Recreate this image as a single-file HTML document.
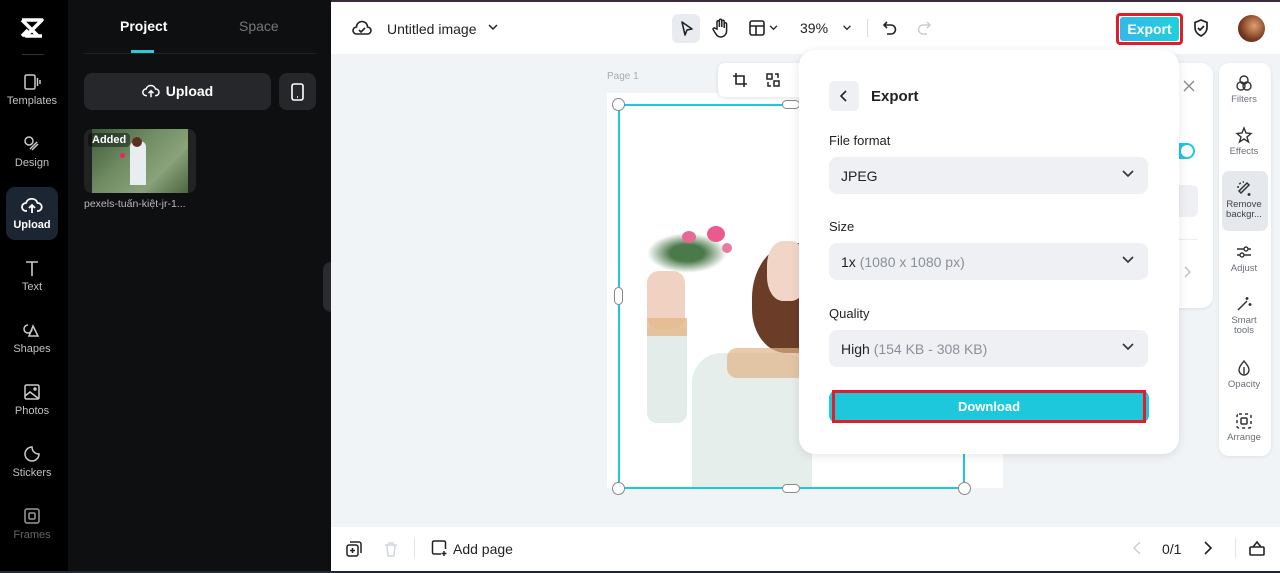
<!DOCTYPE html>
<html><head><meta charset="utf-8"><style>
*{box-sizing:border-box;margin:0;padding:0}
body{width:1280px;height:573px;overflow:hidden;font-family:"Liberation Sans",sans-serif;background:#f1f4f7;position:relative}
.a{position:absolute}
.nav{left:0;top:0;width:68px;height:573px;background:#000}
.ni{position:absolute;left:0;width:64px;text-align:center;color:#bfc1c4;font-size:11px}
.ni svg{display:block;margin:0 auto 3px}
.panel{left:68px;top:0;width:263px;height:573px;background:#0e0f11}
.lbl{font-size:13px;color:#222}
.sel{position:absolute;left:30px;width:319px;height:37px;background:#eef0f3;border-radius:8px;font-size:14px;color:#222;padding:11px 12px}
.sel .g{color:#8a9099}
.chev{position:absolute;right:14px;top:13px}
.rt{position:absolute;left:0;width:50px;text-align:center;font-size:9.5px;color:#6b7078;line-height:10px}
.rt svg{display:block;margin:0 auto 3px}
</style></head><body>
<div class="a" style="left:0;top:0;width:1280px;height:2px;background:#3a2a3a"></div>
<!-- left nav -->
<div class="a nav">
 <svg class="a" style="left:18px;top:17px" width="28" height="22" viewBox="0 0 28 22"><path d="M4 3h20l-16 16h16M4 3l16 16M4 19l6-6" fill="none" stroke="#fff" stroke-width="3.5" stroke-linejoin="round"/></svg>
 <div class="a" style="left:22px;top:54px;width:22px;height:1px;background:#333"></div>
 <div class="ni" style="top:72px"><svg width="20" height="20" viewBox="0 0 20 20" fill="none" stroke="#ccc" stroke-width="1.5"><rect x="3" y="3" width="10" height="14" rx="1.5"/><path d="M15.5 6v8M18 8v4"/></svg>Templates</div>
 <div class="ni" style="top:134px"><svg width="20" height="20" viewBox="0 0 20 20" fill="none" stroke="#ccc" stroke-width="1.5"><circle cx="7" cy="7" r="4"/><path d="M10 16l6-6M8 15l7-7"/></svg>Design</div>
 <div class="a" style="left:6px;top:187px;width:52px;height:53px;background:#1c2633;border-radius:9px"></div>
 <div class="ni" style="top:196px;color:#fff;font-weight:bold"><svg width="22" height="20" viewBox="0 0 22 20" fill="none" stroke="#fff" stroke-width="1.8"><path d="M6 15H5a4 4 0 010-8 6 6 0 0111.5 0A4 4 0 0117 15h-1M11 17V9M8 12l3-3 3 3"/></svg>Upload</div>
 <div class="ni" style="top:258px"><svg width="20" height="20" viewBox="0 0 20 20" fill="none" stroke="#ccc" stroke-width="1.6"><path d="M4 4h12M10 4v14"/></svg>Text</div>
 <div class="ni" style="top:320px"><svg width="20" height="20" viewBox="0 0 20 20" fill="none" stroke="#ccc" stroke-width="1.5"><path d="M6 5a4 4 0 104 4M11 6l-4 10h9z"/></svg>Shapes</div>
 <div class="ni" style="top:382px"><svg width="20" height="20" viewBox="0 0 20 20" fill="none" stroke="#ccc" stroke-width="1.5"><rect x="3" y="3" width="14" height="14" rx="1.5"/><path d="M3 14l5-4 9 7"/><circle cx="13" cy="7" r="1"/></svg>Photos</div>
 <div class="ni" style="top:444px"><svg width="20" height="20" viewBox="0 0 20 20" fill="none" stroke="#ccc" stroke-width="1.5"><path d="M17 10a7 7 0 11-7-7c0 4 3 7 7 7z"/></svg>Stickers</div>
 <div class="ni" style="top:506px;color:#666"><svg width="20" height="20" viewBox="0 0 20 20" fill="none" stroke="#999" stroke-width="1.5"><rect x="3" y="3" width="14" height="14" rx="2"/><rect x="7" y="7" width="6" height="6" rx="1"/></svg>Frames</div>
</div>
<!-- panel -->
<div class="a panel">
 <div class="a" style="left:52px;top:18px;color:#fff;font-weight:bold;font-size:14px">Project</div>
 <div class="a" style="left:171px;top:18px;color:#777;font-size:14px">Space</div>
 <div class="a" style="left:63px;top:50px;width:23px;height:3px;background:#2ec8d8"></div>
 <div class="a" style="left:16px;top:53px;width:232px;height:1px;background:#222"></div>
 <div class="a" style="left:16px;top:73px;width:187px;height:37px;background:#26272b;border-radius:8px;color:#fff;font-weight:bold;font-size:14px;text-align:center;line-height:37px"><svg style="vertical-align:-4px;margin-right:6px" width="18" height="17" viewBox="0 0 22 20" fill="none" stroke="#fff" stroke-width="1.8"><path d="M6 15H5a4 4 0 010-8 6 6 0 0111.5 0A4 4 0 0117 15h-1M11 17V9M8 12l3-3 3 3"/></svg>Upload</div>
 <div class="a" style="left:211px;top:73px;width:37px;height:37px;background:#26272b;border-radius:8px"><svg style="margin:10px 12px" width="13" height="18" viewBox="0 0 13 18" fill="none" stroke="#fff" stroke-width="1.6"><rect x="1" y="1" width="11" height="16" rx="2"/><path d="M6 14h1"/></svg></div>
 <div class="a" style="left:16px;top:129px;width:112px;height:64px;background:#222;border-radius:8px;overflow:hidden">
  <div class="a" style="left:8px;top:0;width:96px;height:64px;background:linear-gradient(135deg,#3f5a3c,#6f8c62 40%,#8aa27a 70%,#4c6440)"></div>
  <div class="a" style="left:46px;top:12px;width:16px;height:44px;background:#e8eef0;border-radius:6px 6px 0 0"></div>
  <div class="a" style="left:48px;top:8px;width:10px;height:10px;background:#5a3020;border-radius:50%"></div>
  <div class="a" style="left:36px;top:24px;width:5px;height:5px;background:#e26;border-radius:50%"></div>
  <div class="a" style="left:4px;top:4px;background:rgba(0,0,0,.4);border-radius:4px;padding:1px 4px;color:#fff;font-size:11px;font-weight:bold">Added</div>
 </div>
 <div class="a" style="left:16px;top:198px;color:#bbb;font-size:10.5px">pexels-tuấn-kiệt-jr-1...</div>
 <div class="a" style="left:255px;top:262px;width:8px;height:50px;background:#2a2b2e;border-radius:8px 0 0 8px"></div>
</div>
<!-- top bar -->
<div class="a" style="left:331px;top:2px;width:949px;height:52px;background:#fff">
 <svg class="a" style="left:21px;top:17px" width="20" height="18" viewBox="0 0 20 18" fill="none" stroke="#222" stroke-width="1.6"><path d="M5 15H4.5a3.5 3.5 0 010-7 5.5 5.5 0 0111 0 3.5 3.5 0 010 7zM7 11l2 2 4-4"/></svg>
 <div class="a" style="left:56px;top:19px;font-size:14px;color:#222">Untitled image</div>
 <svg class="a" style="left:157px;top:22px" width="10" height="7" viewBox="0 0 10 7"><path d="M1 1l4 4 4-4" fill="none" stroke="#222" stroke-width="1.5"/></svg>
 <div class="a" style="left:341px;top:12px;width:28px;height:29px;background:#e8ecf0;border-radius:6px"></div>
 <svg class="a" style="left:348px;top:18px" width="16" height="17" viewBox="0 0 16 17"><path d="M3 2l10 7-5 1-2 5z" fill="none" stroke="#222" stroke-width="1.6" stroke-linejoin="round"/></svg>
 <svg class="a" style="left:381px;top:16px" width="18" height="20" viewBox="0 0 18 20" fill="none" stroke="#222" stroke-width="1.5"><path d="M5 11V4a1.2 1.2 0 012.4 0v5V2.5a1.2 1.2 0 012.4 0V9V3.5a1.2 1.2 0 012.4 0V10V6a1.2 1.2 0 012.4 0v7a6 6 0 01-6 6c-3 0-4-2-6-5l-1.5-2.5a1.2 1.2 0 012-1.2z"/></svg>
 <svg class="a" style="left:418px;top:18px" width="16" height="16" viewBox="0 0 16 16" fill="none" stroke="#222" stroke-width="1.6"><rect x="1" y="1" width="14" height="14" rx="2"/><path d="M1 6h14M7 6v9"/></svg>
 <svg class="a" style="left:438px;top:23px" width="9" height="6" viewBox="0 0 10 7"><path d="M1 1l4 4 4-4" fill="none" stroke="#222" stroke-width="1.5"/></svg>
 <div class="a" style="left:469px;top:18px;font-size:14px;color:#222">39%</div>
 <svg class="a" style="left:511px;top:23px" width="10" height="6" viewBox="0 0 10 7"><path d="M1 1l4 4 4-4" fill="none" stroke="#222" stroke-width="1.5"/></svg>
 <div class="a" style="left:536px;top:17px;width:1px;height:18px;background:#ddd"></div>
 <svg class="a" style="left:551px;top:18px" width="16" height="16" viewBox="0 0 16 16" fill="none" stroke="#222" stroke-width="1.6"><path d="M5 2L2 5l3 3M2 5h7a4.5 4.5 0 010 9H5"/></svg>
 <svg class="a" style="left:585px;top:18px" width="16" height="16" viewBox="0 0 16 16" fill="none" stroke="#ccc" stroke-width="1.4"><path d="M11 2l3 3-3 3M14 5H7a4.5 4.5 0 000 9h4"/></svg>
 <div class="a" style="left:785px;top:11px;width:67px;height:32px;border:3px solid #e41c28;border-radius:4px"></div>
 <div class="a" style="left:789px;top:15px;width:59px;height:24px;background:linear-gradient(90deg,#35b7ea,#1fd0dc);border-radius:3px;color:#fff;font-weight:bold;font-size:14px;text-align:center;line-height:24px">Export</div>
 <svg class="a" style="left:861px;top:16px" width="18" height="20" viewBox="0 0 18 20" fill="none" stroke="#222" stroke-width="1.7"><path d="M9 2l6 2.5v5c0 4-3 7-6 8.5-3-1.5-6-4.5-6-8.5v-5zM6 10l2 2 4-4"/></svg>
 <div class="a" style="left:907px;top:13px;width:27px;height:27px;border-radius:50%;background:radial-gradient(circle at 60% 40%,#e0a070,#7a3a20 60%,#3a1a10)"></div>
</div>
<!-- canvas -->
<div class="a" style="left:607px;top:71px;font-size:10px;color:#aaa">Page 1</div>
<div class="a" style="left:607px;top:93px;width:396px;height:395px;background:#fff;overflow:hidden">
 <!-- figure approximation -->
 <div class="a" style="left:40px;top:140px;width:80px;height:40px;background:radial-gradient(ellipse,#4b7a4a 30%,rgba(0,0,0,0) 70%)"></div>
 <div class="a" style="left:75px;top:138px;width:14px;height:12px;background:#e46a94;border-radius:50%"></div>
 <div class="a" style="left:100px;top:133px;width:18px;height:16px;background:#ea5a8e;border-radius:50%"></div>
 <div class="a" style="left:115px;top:150px;width:10px;height:10px;background:#e87aa0;border-radius:50%"></div>
 <div class="a" style="left:145px;top:150px;width:85px;height:110px;background:#6b3c28;border-radius:50% 0 0 40%"></div>
 <div class="a" style="left:160px;top:148px;width:40px;height:60px;background:#f1d6c8;border-radius:40%"></div>
 <div class="a" style="left:40px;top:230px;width:40px;height:100px;background:#e4ece9;border-radius:10px"></div>
 <div class="a" style="left:40px;top:178px;width:38px;height:58px;background:#f0d2c2;border-radius:12px"></div>
 <div class="a" style="left:85px;top:260px;width:120px;height:140px;background:#e6eeeb;border-radius:30px 30px 0 0"></div>
 <div class="a" style="left:40px;top:225px;width:40px;height:18px;background:#e4b88a;opacity:.8"></div>
 <div class="a" style="left:120px;top:255px;width:80px;height:30px;background:#e0b486;opacity:.7;border-radius:10px"></div>
</div>
<div class="a" style="left:618px;top:104px;width:347px;height:385px;border:2px solid #1ec8dc"></div>
<div class="a" style="left:612px;top:98px;width:13px;height:13px;border:1.5px solid #888;background:#fff;border-radius:50%"></div>
<div class="a" style="left:612px;top:482px;width:13px;height:13px;border:1.5px solid #888;background:#fff;border-radius:50%"></div>
<div class="a" style="left:958px;top:482px;width:13px;height:13px;border:1.5px solid #888;background:#fff;border-radius:50%"></div>
<div class="a" style="left:614px;top:287px;width:9px;height:18px;border:1.5px solid #888;background:#fff;border-radius:5px"></div>
<div class="a" style="left:782px;top:484px;width:18px;height:9px;border:1.5px solid #888;background:#fff;border-radius:5px"></div>
<div class="a" style="left:782px;top:100px;width:18px;height:9px;border:1.5px solid #888;background:#fff;border-radius:5px"></div>
<div class="a" style="left:718px;top:63px;width:90px;height:34px;background:#fff;border-radius:7px;box-shadow:0 1px 4px rgba(0,0,0,.12)">
 <svg class="a" style="left:14px;top:9px" width="16" height="16" viewBox="0 0 16 16" fill="none" stroke="#222" stroke-width="1.6"><path d="M4 1v11h11M1 4h11v11"/></svg>
 <svg class="a" style="left:47px;top:9px" width="16" height="16" viewBox="0 0 16 16" fill="none" stroke="#222" stroke-width="1.5"><rect x="2" y="2" width="5" height="5"/><rect x="9" y="9" width="5" height="5"/><path d="M10 2h3v4M6 14H3v-4"/></svg>
</div>
<!-- background side panel -->
<div class="a" style="left:1000px;top:63px;width:213px;height:245px;background:#fff;border-radius:12px;box-shadow:0 1px 4px rgba(0,0,0,.08)">
 <svg class="a" style="left:183px;top:17px" width="12" height="12" viewBox="0 0 12 12"><path d="M1 1l10 10M11 1L1 11" stroke="#888" stroke-width="1.3"/></svg>
 <div class="a" style="left:165px;top:80px;width:30px;height:16px;background:#1ec8dc;border-radius:8px"><div class="a" style="left:16px;top:2px;width:12px;height:12px;background:#fff;border-radius:50%"></div></div>
 <div class="a" style="left:150px;top:122px;width:48px;height:32px;background:#eef0f3;border-radius:6px"></div>
 <div class="a" style="left:160px;top:176px;width:38px;height:1px;background:#eee"></div>
 <svg class="a" style="left:184px;top:203px" width="7" height="12" viewBox="0 0 7 12"><path d="M1 1l5 5-5 5" fill="none" stroke="#bbb" stroke-width="1.3"/></svg>
</div>
<!-- right toolbar -->
<div class="a" style="left:1219px;top:63px;width:52px;height:393px;background:#fff;border-radius:10px;box-shadow:0 1px 4px rgba(0,0,0,.08)">
 <div class="rt" style="top:11px"><svg width="18" height="18" viewBox="0 0 18 18" fill="none" stroke="#333" stroke-width="1.4"><circle cx="9" cy="6" r="4"/><circle cx="6" cy="12" r="4"/><circle cx="12" cy="12" r="4"/></svg>Filters</div>
 <div class="rt" style="top:63px"><svg width="18" height="18" viewBox="0 0 18 18" fill="none" stroke="#333" stroke-width="1.4"><path d="M9 2l2 5 5 .5-4 3.5 1.5 5L9 13l-4.5 3 1.5-5-4-3.5 5-.5z"/></svg>Effects</div>
 <div class="a" style="left:3px;top:108px;width:46px;height:60px;background:#e5e8ec;border-radius:7px"></div>
 <div class="rt" style="top:116px;color:#444"><svg width="18" height="18" viewBox="0 0 18 18" fill="none" stroke="#333" stroke-width="1.5"><path d="M6 14l8-8-2-2-8 8zM14 14v3M12.5 15.5h3" /><path d="M3 9a6 6 0 016-6" stroke-dasharray="2 2"/></svg>Remove<br>backgr...</div>
 <div class="rt" style="top:180px"><svg width="18" height="18" viewBox="0 0 18 18" fill="none" stroke="#333" stroke-width="1.4"><path d="M2 6h14M2 12h14"/><circle cx="11" cy="6" r="2" fill="#fff"/><circle cx="7" cy="12" r="2" fill="#fff"/></svg>Adjust</div>
 <div class="rt" style="top:232px"><svg width="18" height="18" viewBox="0 0 18 18" fill="none" stroke="#333" stroke-width="1.5"><path d="M3 15l9-9M12 2v3M10.5 3.5h3M15 8v3M13.5 9.5h3"/></svg>Smart<br>tools</div>
 <div class="rt" style="top:296px"><svg width="18" height="18" viewBox="0 0 18 18" fill="none" stroke="#333" stroke-width="1.4"><path d="M9 2c3 4 5 6 5 9a5 5 0 01-10 0c0-3 2-5 5-9zM9 8v7"/></svg>Opacity</div>
 <div class="rt" style="top:349px"><svg width="18" height="18" viewBox="0 0 18 18" fill="none" stroke="#333" stroke-width="1.5"><rect x="2" y="2" width="14" height="14" rx="2" stroke-dasharray="3 3"/><rect x="6" y="6" width="6" height="6" rx="1"/></svg>Arrange</div>
</div>
<!-- export popup -->
<div class="a" style="left:799px;top:50px;width:380px;height:404px;background:#fff;border-radius:16px;box-shadow:0 2px 10px rgba(0,0,0,.1)">
 <div class="a" style="left:30px;top:31px;width:30px;height:30px;background:#eef0f3;border-radius:6px"><svg style="margin:9px 11px" width="7" height="12" viewBox="0 0 7 12"><path d="M6 1L1 6l5 5" fill="none" stroke="#222" stroke-width="1.6"/></svg></div>
 <div class="a" style="left:72px;top:38px;font-size:15px;font-weight:bold;color:#222">Export</div>
 <div class="a lbl" style="left:30px;top:83px">File format</div>
 <div class="sel" style="top:107px">JPEG<svg class="chev" width="12" height="8" viewBox="0 0 12 8"><path d="M1 1l5 5 5-5" fill="none" stroke="#333" stroke-width="1.6"/></svg></div>
 <div class="a lbl" style="left:30px;top:169px">Size</div>
 <div class="sel" style="top:193px">1x <span class="g">(1080 x 1080 px)</span><svg class="chev" width="12" height="8" viewBox="0 0 12 8"><path d="M1 1l5 5 5-5" fill="none" stroke="#333" stroke-width="1.6"/></svg></div>
 <div class="a lbl" style="left:30px;top:256px">Quality</div>
 <div class="sel" style="top:280px">High <span class="g">(154 KB - 308 KB)</span><svg class="chev" width="12" height="8" viewBox="0 0 12 8"><path d="M1 1l5 5 5-5" fill="none" stroke="#333" stroke-width="1.6"/></svg></div>
 <div class="a" style="left:30px;top:340px;width:320px;height:33px;background:#1ec8dc;border-radius:8px"></div>
 <div class="a" style="left:33px;top:340px;width:314px;height:33px;border:3px solid #e41c28;color:#fff;font-weight:bold;font-size:13px;text-align:center;line-height:27px">Download</div>
</div>
<!-- bottom bar -->
<div class="a" style="left:331px;top:527px;width:949px;height:44px;background:#fff">
 <svg class="a" style="left:15px;top:14px" width="16" height="16" viewBox="0 0 16 16" fill="none" stroke="#222" stroke-width="1.5"><rect x="1" y="4" width="11" height="11" rx="2"/><path d="M4 1h9a2 2 0 012 2v9M6.5 7v5M4 9.5h5"/></svg>
 <svg class="a" style="left:53px;top:14px" width="14" height="16" viewBox="0 0 14 16" fill="none" stroke="#cfd6de" stroke-width="1.4"><path d="M1 4h12M5 4V2h4v2M3 4l1 11h6l1-11"/></svg>
 <div class="a" style="left:83px;top:11px;width:1px;height:20px;background:#e5e5e5"></div>
 <svg class="a" style="left:100px;top:13px" width="17" height="17" viewBox="0 0 17 17" fill="none" stroke="#222" stroke-width="1.5"><path d="M10 14H3a1.5 1.5 0 01-1.5-1.5v-10A1.5 1.5 0 013 1h10a1.5 1.5 0 011.5 1.5V9M13 11v5M10.5 13.5h5"/></svg>
 <div class="a" style="left:122px;top:14px;font-size:14px;color:#222">Add page</div>
 <svg class="a" style="left:802px;top:14px" width="8" height="14" viewBox="0 0 8 14"><path d="M7 1L1 7l6 6" fill="none" stroke="#ccc" stroke-width="1.4"/></svg>
 <div class="a" style="left:831px;top:14px;font-size:14px;color:#222">0/1</div>
 <svg class="a" style="left:873px;top:14px" width="8" height="14" viewBox="0 0 8 14"><path d="M1 1l6 6-6 6" fill="none" stroke="#222" stroke-width="1.6"/></svg>
 <div class="a" style="left:904px;top:11px;width:1px;height:20px;background:#e5e5e5"></div>
 <svg class="a" style="left:917px;top:12px" width="18" height="18" viewBox="0 0 18 18" fill="none" stroke="#222" stroke-width="1.6"><rect x="2" y="8" width="14" height="8" rx="1"/><path d="M5 8l4-5 4 5"/></svg>
</div>
<div class="a" style="left:0;top:571px;width:1280px;height:2px;background:#1e2a30"></div>
</body></html>
